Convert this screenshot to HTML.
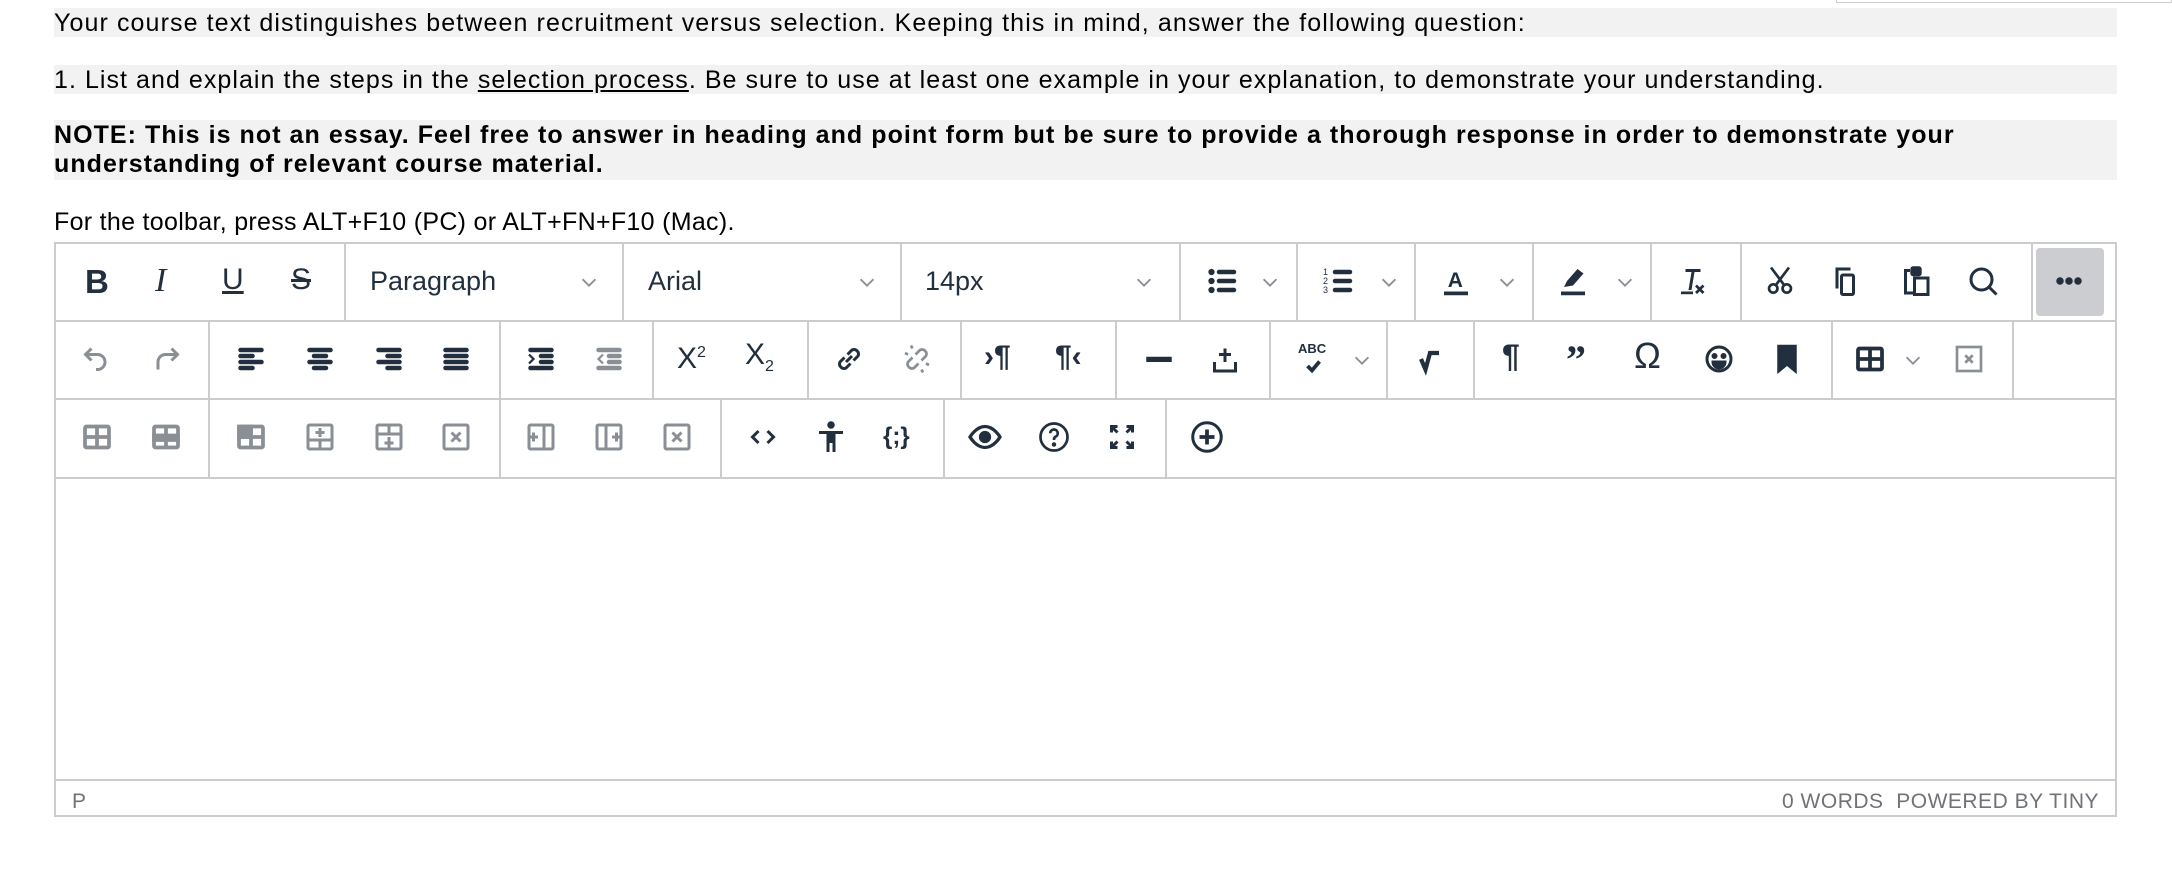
<!DOCTYPE html>
<html><head><meta charset="utf-8"><style>
*{margin:0;padding:0;box-sizing:border-box}
body{width:2172px;height:880px;background:#fff;position:relative;overflow:hidden;font-family:"Liberation Sans",sans-serif;color:#000}
.q{position:absolute;left:54px;width:2063px;background:#f2f2f2;font-size:25px;line-height:29px;letter-spacing:1.1px;white-space:nowrap}
.a{position:absolute}
.ed{position:absolute;left:54px;top:242px;width:2063px;height:575px;border:2px solid #ccc}
.hl{position:absolute;left:0;width:2059px;height:2px;background:#ccc}
.vl{position:absolute;width:2px;height:78px;background:#ccc}
.i{position:absolute;width:32px;height:32px}
.i svg{width:36px;height:36px;display:block;margin:-2px 0 0 -2px}
.dk{fill:#222f3e;stroke:#222f3e}
.gr{fill:#8a8f96;stroke:#8a8f96}
.ch{position:absolute;width:22px;height:22px}
.sel{position:absolute;font-size:27px;color:#222f3e;top:266px}
</style></head><body>
<div style="position:absolute;left:1836px;top:0;width:336px;height:3px;border:1px solid #ccc;border-top:0"></div>
<div class="q" style="top:8px;height:29px;padding-top:1px">Your course text distinguishes between recruitment versus selection. Keeping this in mind, answer the following question:</div>
<div class="q" style="top:65px;height:29px;padding-top:1px;letter-spacing:1.05px">1. List and explain the steps in the <u>selection process</u>. Be sure to use at least one example in your explanation, to demonstrate your understanding.</div>
<div class="q" style="top:120px;height:60px;font-weight:bold;line-height:29px;padding-top:1px;letter-spacing:1.05px">NOTE: This is not an essay. Feel free to answer in heading and point form but be sure to provide a thorough response in order to demonstrate your<br>understanding of relevant course material.</div>
<div class="a" style="left:54px;top:208px;font-size:25px;letter-spacing:0.3px">For the toolbar, press ALT+F10 (PC) or ALT+FN+F10 (Mac).</div>

<div class="ed">
 <div class="hl" style="top:76px"></div>
 <div class="hl" style="top:154px"></div>
 <div class="hl" style="top:233px"></div>
 <div class="hl" style="top:535px"></div>
 <div class="vl" style="left:288px;top:0"></div><div class="vl" style="left:566px;top:0"></div><div class="vl" style="left:844px;top:0"></div><div class="vl" style="left:1123px;top:0"></div><div class="vl" style="left:1240px;top:0"></div><div class="vl" style="left:1358px;top:0"></div><div class="vl" style="left:1476px;top:0"></div><div class="vl" style="left:1594px;top:0"></div><div class="vl" style="left:1684px;top:0"></div><div class="vl" style="left:1975px;top:0"></div>
 <div class="vl" style="left:152px;top:78px"></div><div class="vl" style="left:443px;top:78px"></div><div class="vl" style="left:596px;top:78px"></div><div class="vl" style="left:751px;top:78px"></div><div class="vl" style="left:904px;top:78px"></div><div class="vl" style="left:1059px;top:78px"></div><div class="vl" style="left:1213px;top:78px"></div><div class="vl" style="left:1330px;top:78px"></div><div class="vl" style="left:1417px;top:78px"></div><div class="vl" style="left:1775px;top:78px"></div><div class="vl" style="left:1956px;top:78px"></div>
 <div class="vl" style="left:152px;top:156px"></div><div class="vl" style="left:443px;top:156px"></div><div class="vl" style="left:664px;top:156px"></div><div class="vl" style="left:887px;top:156px"></div><div class="vl" style="left:1109px;top:156px"></div>
 <div style="position:absolute;left:1980px;top:4px;width:68px;height:68px;background:#cccdd0;border-radius:4px"></div>
 <div class="a" style="left:16px;top:546px;font-size:21px;color:#6f7378">P</div>
 <div class="a" style="right:16px;top:546px;font-size:21px;color:#6f7378;letter-spacing:.5px">0 WORDS&nbsp;&nbsp;POWERED BY TINY</div>
</div>

<!-- Row 1 -->
<div class="a" style="left:85px;top:263px;font-size:33px;font-weight:bold;color:#222f3e">B</div>
<div class="a" style="left:155px;top:262px;font-size:34px;font-style:italic;font-family:'Liberation Serif',serif;color:#222f3e">I</div>
<div class="a" style="left:222px;top:263px;font-size:30px;color:#222f3e;text-decoration:underline">U</div>
<div class="a" style="left:291px;top:263px;font-size:30px;color:#222f3e;text-decoration:line-through">S</div>
<div class="sel" style="left:370px">Paragraph</div>
<div class="sel" style="left:648px">Arial</div>
<div class="sel" style="left:925px">14px</div>
<svg class="ch" style="left:578px;top:271px" viewBox="0 0 24 24"><polyline points="5,9 12,16 19,9" fill="none" stroke="#8a8f96" stroke-width="2"/></svg>
<svg class="ch" style="left:856px;top:271px" viewBox="0 0 24 24"><polyline points="5,9 12,16 19,9" fill="none" stroke="#8a8f96" stroke-width="2"/></svg>
<svg class="ch" style="left:1133px;top:271px" viewBox="0 0 24 24"><polyline points="5,9 12,16 19,9" fill="none" stroke="#8a8f96" stroke-width="2"/></svg>
<svg class="ch" style="left:1259px;top:271px" viewBox="0 0 24 24"><polyline points="5,9 12,16 19,9" fill="none" stroke="#8a8f96" stroke-width="2"/></svg>
<svg class="ch" style="left:1378px;top:271px" viewBox="0 0 24 24"><polyline points="5,9 12,16 19,9" fill="none" stroke="#8a8f96" stroke-width="2"/></svg>
<svg class="ch" style="left:1496px;top:271px" viewBox="0 0 24 24"><polyline points="5,9 12,16 19,9" fill="none" stroke="#8a8f96" stroke-width="2"/></svg>
<svg class="ch" style="left:1614px;top:271px" viewBox="0 0 24 24"><polyline points="5,9 12,16 19,9" fill="none" stroke="#8a8f96" stroke-width="2"/></svg>
<div class="i" style="left:1206px;top:265px"><svg viewBox="0 0 24 24" class="dk"><circle cx="5" cy="6" r="1.6"/><circle cx="5" cy="12" r="1.6"/><circle cx="5" cy="18" r="1.6"/><rect x="9" y="5" width="12" height="2" rx="1"/><rect x="9" y="11" width="12" height="2" rx="1"/><rect x="9" y="17" width="12" height="2" rx="1"/></svg></div>
<div class="i" style="left:1322px;top:265px"><svg viewBox="0 0 24 24" class="dk"><text x="2" y="8" font-size="6" stroke="none">1</text><text x="2" y="14" font-size="6" stroke="none">2</text><text x="2" y="20" font-size="6" stroke="none">3</text><rect x="9" y="5" width="12" height="2" rx="1"/><rect x="9" y="11" width="12" height="2" rx="1"/><rect x="9" y="17" width="12" height="2" rx="1"/></svg></div>
<div class="i" style="left:1440px;top:265px"><svg viewBox="0 0 24 24" class="dk"><text x="6.5" y="16" font-size="14" font-weight="bold" stroke="none" font-family="Liberation Sans">A</text><rect x="4" y="19" width="16" height="2.5" stroke="none"/></svg></div>
<div class="i" style="left:1557px;top:265px"><svg viewBox="0 0 24 24" class="dk"><path d="M6 16l2-4 7-8 4 3-7 8z" stroke="none"/><rect x="4" y="19" width="16" height="2.5" stroke="none"/></svg></div>
<div class="i" style="left:1677px;top:265px"><svg viewBox="0 0 24 24" class="dk"><path d="M7 4h10v2h-4l-2 12h-2l2-12H7z" stroke="none"/><rect x="4" y="19" width="8" height="1.8" stroke="none"/><path d="M14 15l5 5M19 15l-5 5" fill="none" stroke-width="1.8"/></svg></div>
<div class="i" style="left:1764px;top:265px"><svg viewBox="0 0 24 24" class="dk" fill="none"><circle cx="7.5" cy="17" r="2.8" fill="none" stroke-width="1.8"/><circle cx="16.5" cy="17" r="2.8" fill="none" stroke-width="1.8"/><path d="M9 15L18 3M15 15L6 3" stroke-width="1.8"/></svg></div>
<div class="i" style="left:1830px;top:265px"><svg viewBox="0 0 24 24" class="dk" fill="none"><path d="M6 17V4h9" fill="none" stroke-width="2"/><rect x="9" y="8" width="8" height="13" rx="1" fill="none" stroke-width="2"/></svg></div>
<div class="i" style="left:1900px;top:265px"><svg viewBox="0 0 24 24" class="dk" fill="none"><path d="M8 5H5v15h5" fill="none" stroke-width="2"/><rect x="9" y="3" width="6" height="5" rx="1" stroke-width="1.6"/><rect x="11" y="10" width="9" height="11" fill="none" stroke-width="2"/></svg></div>
<div class="i" style="left:1967px;top:265px"><svg viewBox="0 0 24 24" class="dk" fill="none"><circle cx="11" cy="11" r="7" fill="none" stroke-width="2"/><path d="M16 16l5 5" stroke-width="2"/></svg></div>
<div class="i" style="left:2053px;top:265px"><svg viewBox="0 0 24 24" class="dk"><circle cx="6" cy="12" r="2"/><circle cx="12" cy="12" r="2"/><circle cx="18" cy="12" r="2"/></svg></div>

<!-- Row 2 -->
<div class="i" style="left:80px;top:343px"><svg viewBox="0 0 24 24" fill="none" stroke="#8a8f96" stroke-width="2"><path d="M9 5L5 9l4 4"/><path d="M5 9h8a5 5 0 0 1 0 10h-1"/></svg></div>
<div class="i" style="left:151px;top:343px"><svg viewBox="0 0 24 24" fill="none" stroke="#8a8f96" stroke-width="2"><path d="M15 5l4 4-4 4"/><path d="M19 9h-8a5 5 0 0 0-5 5v5"/></svg></div>
<div class="i" style="left:235px;top:343px"><svg viewBox="0 0 24 24" class="dk"><rect x="4" y="5" width="16" height="2" rx="1"/><rect x="4" y="9" width="10" height="2" rx="1"/><rect x="4" y="13" width="16" height="2" rx="1"/><rect x="4" y="17" width="10" height="2" rx="1"/></svg></div>
<div class="i" style="left:304px;top:343px"><svg viewBox="0 0 24 24" class="dk"><rect x="4" y="5" width="16" height="2" rx="1"/><rect x="7" y="9" width="10" height="2" rx="1"/><rect x="4" y="13" width="16" height="2" rx="1"/><rect x="7" y="17" width="10" height="2" rx="1"/></svg></div>
<div class="i" style="left:373px;top:343px"><svg viewBox="0 0 24 24" class="dk"><rect x="4" y="5" width="16" height="2" rx="1"/><rect x="10" y="9" width="10" height="2" rx="1"/><rect x="4" y="13" width="16" height="2" rx="1"/><rect x="10" y="17" width="10" height="2" rx="1"/></svg></div>
<div class="i" style="left:440px;top:343px"><svg viewBox="0 0 24 24" class="dk"><rect x="4" y="5" width="16" height="2" rx="1"/><rect x="4" y="9" width="16" height="2" rx="1"/><rect x="4" y="13" width="16" height="2" rx="1"/><rect x="4" y="17" width="16" height="2" rx="1"/></svg></div>
<div class="i" style="left:525px;top:343px"><svg viewBox="0 0 24 24" class="dk"><rect x="4" y="5" width="16" height="2" rx="1"/><rect x="11" y="9" width="9" height="2" rx="1"/><rect x="11" y="13" width="9" height="2" rx="1"/><rect x="4" y="17" width="16" height="2" rx="1"/><path d="M4 9l3 3-3 3" fill="none" stroke-width="1.5"/></svg></div>
<div class="i" style="left:593px;top:343px"><svg viewBox="0 0 24 24" class="gr"><rect x="4" y="5" width="16" height="2" rx="1"/><rect x="11" y="9" width="9" height="2" rx="1"/><rect x="11" y="13" width="9" height="2" rx="1"/><rect x="4" y="17" width="16" height="2" rx="1"/><path d="M8 9l-3 3 3 3" fill="none" stroke-width="1.5"/></svg></div>
<div class="a" style="left:677px;top:342px;font-size:30px;color:#222f3e">X<sup style="font-size:16px">2</sup></div>
<div class="a" style="left:745px;top:338px;font-size:30px;color:#222f3e">X<sub style="font-size:16px">2</sub></div>
<div class="i" style="left:833px;top:343px"><svg viewBox="0 0 24 24" fill="none" stroke="#222f3e" stroke-width="2"><path d="M10 14l4-4M9 11l-3 3a3 3 0 0 0 4 4l3-3M15 13l3-3a3 3 0 0 0-4-4l-3 3"/></svg></div>
<div class="i" style="left:901px;top:343px"><svg viewBox="0 0 24 24" fill="none" stroke="#8a8f96" stroke-width="1.8"><path d="M9 11l-3 3a3 3 0 0 0 4 4l3-3M15 13l3-3a3 3 0 0 0-4-4l-3 3M8 3l1 2M4 8l2 1M16 21l-1-2M20 16l-2-1"/></svg></div>
<div class="a" style="left:984px;top:340px;font-size:30px;font-weight:bold;color:#222f3e">›¶</div>
<div class="a" style="left:1055px;top:340px;font-size:30px;font-weight:bold;color:#222f3e">¶‹</div>
<div class="i" style="left:1143px;top:343px"><svg viewBox="0 0 24 24" class="dk"><rect x="4" y="11" width="16" height="2.5"/></svg></div>
<div class="i" style="left:1209px;top:343px"><svg viewBox="0 0 24 24" fill="none" stroke="#222f3e" stroke-width="2"><path d="M12 5v9M8 9h8M5 14v6h14v-6"/></svg></div>
<div class="a" style="left:1298px;top:341px;font-size:13px;font-weight:bold;color:#222f3e">ABC</div>
<div class="i" style="left:1296px;top:350px"><svg viewBox="0 0 24 24" fill="none" stroke="#222f3e" stroke-width="2.5"><path d="M9 12l3 3 5-6"/></svg></div>
<svg class="ch" style="left:1351px;top:349px" viewBox="0 0 24 24"><polyline points="5,9 12,16 19,9" fill="none" stroke="#8a8f96" stroke-width="2"/></svg>
<div class="i" style="left:1414px;top:343px"><svg viewBox="0 0 24 24" fill="none" stroke="#222f3e" stroke-width="2.8"><path d="M6 12l3 7 3-11h6"/></svg></div>
<div class="a" style="left:1502px;top:338px;font-size:32px;font-weight:bold;color:#222f3e">¶</div>
<div class="a" style="left:1566px;top:336px;font-size:40px;font-weight:bold;color:#222f3e;font-family:'Liberation Serif',serif">”</div>
<div class="a" style="left:1634px;top:335px;font-size:36px;color:#222f3e">Ω</div>
<div class="i" style="left:1703px;top:343px"><svg viewBox="0 0 24 24" fill="none" stroke="#222f3e" stroke-width="2"><circle cx="12" cy="12" r="8"/><circle cx="9" cy="10" r="1" fill="#222f3e"/><circle cx="15" cy="10" r="1" fill="#222f3e"/><path d="M8 14h8a4 4 0 0 1-8 0z" fill="#222f3e"/></svg></div>
<div class="i" style="left:1771px;top:343px"><svg viewBox="0 0 24 24" class="dk"><path d="M6 3h12v18l-6-5-6 5z"/></svg></div>
<div class="i" style="left:1854px;top:343px"><svg viewBox="0 0 24 24" fill="none" stroke="#222f3e" stroke-width="2.5"><rect x="4" y="5" width="16" height="14" rx="1"/><path d="M4 12h16M12 5v14"/></svg></div>
<svg class="ch" style="left:1902px;top:349px" viewBox="0 0 24 24"><polyline points="5,9 12,16 19,9" fill="none" stroke="#8a8f96" stroke-width="2"/></svg>
<div class="i" style="left:1953px;top:343px"><svg viewBox="0 0 24 24" fill="none" stroke="#8a8f96" stroke-width="1.8"><rect x="4" y="4" width="16" height="16"/><path d="M9.5 9.5l5 5M14.5 9.5l-5 5"/></svg></div>

<!-- Row 3 -->
<div class="i" style="left:81px;top:421px"><svg viewBox="0 0 24 24" fill="none" stroke="#8a8f96" stroke-width="2.5"><rect x="4" y="5" width="16" height="14" rx="1"/><path d="M4 12h16M12 5v14"/></svg></div>
<div class="i" style="left:150px;top:421px"><svg viewBox="0 0 24 24" fill="#8a8f96" stroke="#8a8f96" stroke-width="2.5"><rect x="4" y="5" width="16" height="14" rx="1" fill="none"/><rect x="4" y="11" width="16" height="3"/><path d="M12 5v14"/></svg></div>
<div class="i" style="left:235px;top:421px"><svg viewBox="0 0 24 24" fill="#8a8f96" stroke="#8a8f96" stroke-width="2.5"><rect x="4" y="5" width="16" height="14" rx="1" fill="none"/><rect x="4" y="5" width="8" height="7"/><path d="M4 12h16M12 5v14"/></svg></div>
<div class="i" style="left:304px;top:421px"><svg viewBox="0 0 24 24" fill="none" stroke="#8a8f96" stroke-width="2"><rect x="4" y="4" width="16" height="16" rx="1"/><path d="M4 14h16M12 14v6M12 6v6M9 9h6"/></svg></div>
<div class="i" style="left:373px;top:421px"><svg viewBox="0 0 24 24" fill="none" stroke="#8a8f96" stroke-width="2"><rect x="4" y="4" width="16" height="16" rx="1"/><path d="M4 10h16M12 4v6M12 12v7M9 16h6"/></svg></div>
<div class="i" style="left:440px;top:421px"><svg viewBox="0 0 24 24" fill="none" stroke="#8a8f96" stroke-width="2"><rect x="4" y="4" width="16" height="16" rx="1"/><path d="M9 9l6 6M15 9l-6 6"/></svg></div>
<div class="i" style="left:525px;top:421px"><svg viewBox="0 0 24 24" fill="none" stroke="#8a8f96" stroke-width="2"><rect x="4" y="4" width="16" height="16" rx="1"/><path d="M14 4v16M4 12h6M7 9v6"/></svg></div>
<div class="i" style="left:593px;top:421px"><svg viewBox="0 0 24 24" fill="none" stroke="#8a8f96" stroke-width="2"><rect x="4" y="4" width="16" height="16" rx="1"/><path d="M10 4v16M14 12h6M17 9v6"/></svg></div>
<div class="i" style="left:661px;top:421px"><svg viewBox="0 0 24 24" fill="none" stroke="#8a8f96" stroke-width="2"><rect x="4" y="4" width="16" height="16" rx="1"/><path d="M9 9l6 6M15 9l-6 6"/></svg></div>
<div class="i" style="left:747px;top:421px"><svg viewBox="0 0 24 24" fill="none" stroke="#222f3e" stroke-width="2"><path d="M9 8l-4 4 4 4M15 8l4 4-4 4"/></svg></div>
<div class="i" style="left:815px;top:421px"><svg viewBox="0 0 24 24" class="dk"><circle cx="12" cy="4" r="2"/><path d="M4 8h16v2h-5v12h-2v-6h-2v6H9V10H4z" stroke="none"/></svg></div>
<div class="a" style="left:883px;top:423px;font-size:24px;font-weight:bold;color:#222f3e">{;}</div>
<div class="i" style="left:969px;top:421px"><svg viewBox="0 0 24 24" fill="none" stroke="#222f3e" stroke-width="2.2"><path d="M2 12s4-7 10-7 10 7 10 7-4 7-10 7S2 12 2 12z"/><circle cx="12" cy="12" r="3" fill="#222f3e"/></svg></div>
<div class="i" style="left:1038px;top:421px"><svg viewBox="0 0 24 24" fill="none" stroke="#222f3e" stroke-width="1.8"><circle cx="12" cy="12" r="9"/><path d="M9.5 9.5a2.5 2.5 0 1 1 3.5 2.3c-.7.4-1 .9-1 1.7v.5"/><circle cx="12" cy="17" r=".6" fill="#222f3e"/></svg></div>
<div class="i" style="left:1106px;top:421px"><svg viewBox="0 0 24 24" fill="none" stroke="#222f3e" stroke-width="2"><path d="M5 9V5h4M5 5l4 4M19 9V5h-4M19 5l-4 4M5 15v4h4M5 19l4-4M19 15v4h-4M19 19l-4-4"/></svg></div>
<div class="i" style="left:1191px;top:421px"><svg viewBox="0 0 24 24" fill="none" stroke="#222f3e" stroke-width="2"><circle cx="12" cy="12" r="9.5"/><path d="M12 7v10M7 12h10" stroke-width="2.5"/></svg></div>
</body></html>
